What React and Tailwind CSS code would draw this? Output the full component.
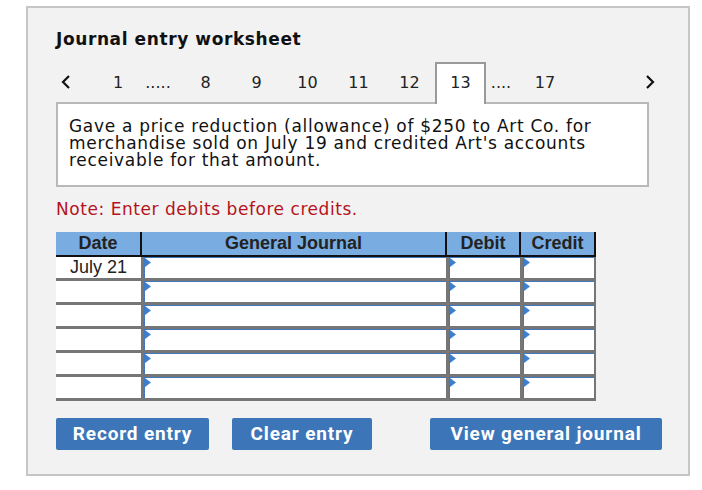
import React from 'react';

const Tri = () => (
  <svg className="absolute left-0 top-0" width="6" height="9" viewBox="0 0 6 9">
    <polygon points="0,0 6,4.5 0,9" fill="#3d7fd0" />
  </svg>
);

const InputCell = ({ w }) => (
  <div className={`relative h-full bg-white border-l border-t border-[#3f78c0] ${w}`}>
    <Tri />
  </div>
);

const Chevron = ({ dir }) => (
  <svg width="10" height="16" viewBox="0 0 10 16">
    <polyline
      points={dir === 'left' ? '8,2 2,8 8,14' : '2,2 8,8 2,14'}
      fill="none"
      stroke="#111"
      strokeWidth="2.2"
    />
  </svg>
);

const tabs = [
  { t: '1', cls: 'ml-[24px] w-[36px]' },
  { t: '.....', cls: 'w-[44px]' },
  { t: '8', cls: 'w-[51px]' },
  { t: '9', cls: 'w-[51px]' },
  { t: '10', cls: 'w-[51px]' },
  { t: '11', cls: 'w-[51px]' },
  { t: '12', cls: 'w-[51px]' },
];

const rows = ['July 21', '', '', '', '', ''];

export default function App() {
  return (
    <div className="w-[702px] h-[490px] bg-white pt-[6px] pl-[26px]">
      <div className="w-[664px] h-[470px] border-2 border-[#c6c6c6] bg-[#f2f2f2] pl-[28px] pr-[26px] pt-[21px] font-['DejaVu_Sans',sans-serif] text-[#222]">
        <h1 className="text-[17px] tracking-[0.6px] font-bold leading-[20px] text-[#111]">Journal entry worksheet</h1>

        {/* Tab row */}
        <div className="mt-[13px] flex items-end h-[40px] text-[16px] leading-[20px]">
          <div className="w-[20px] h-[38px] flex items-center justify-center pb-[2px]">
            <Chevron dir="left" />
          </div>
          {tabs.map((x, i) => (
            <div key={i} className={`h-[38px] flex items-center justify-center ${x.cls}`}>
              {x.t}
            </div>
          ))}
          <div className="relative z-10 -mb-[2px] w-[51px] h-[42px] bg-white border-2 border-b-0 border-[#9a9a9a] flex items-center justify-center pb-[2px]">
            13
          </div>
          <div className="h-[38px] w-[30px] flex items-center justify-center">....</div>
          <div className="h-[38px] w-[58px] flex items-center justify-center">17</div>
          <div className="flex-1" />
          <div className="w-[20px] h-[38px] flex items-center justify-center pb-[2px] mr-[2px]">
            <Chevron dir="right" />
          </div>
        </div>

        {/* Description */}
        <div className="w-[593px] border-2 border-[#b9b9b9] bg-white pl-[11px] pr-[10px] pt-[14px] pb-[16px] text-[17px] tracking-[0.7px] leading-[17px] text-[#111]">
          Gave a price reduction (allowance) of $250 to Art Co. for merchandise sold on July 19 and credited Art's accounts receivable for that amount.
        </div>

        <p className="mt-[12px] text-[17px] tracking-[0.55px] leading-[20px] text-[#b5121b]">Note: Enter debits before credits.</p>

        {/* Table */}
        <div className="mt-[13px] w-[540px] font-['Liberation_Sans',sans-serif] text-[18px]">
          <div className="flex h-[25px] bg-[#79ade2] border-b-2 border-[#111] font-bold text-[#222] leading-[23px]">
            <div className="w-[86px] border-r-2 border-[#111] text-center">Date</div>
            <div className="w-[305px] border-r-2 border-[#111] text-center">General Journal</div>
            <div className="w-[74px] border-r-2 border-[#111] text-center">Debit</div>
            <div className="w-[75px] border-r-2 border-[#111] text-center">Credit</div>
          </div>
          {rows.map((d, i) => (
            <div key={i} className="flex gap-[3px] h-[24px] bg-[#767676] pb-[3px] pr-[2px]">
              <div className="w-[85px] h-full bg-white text-center leading-[21px] text-[#222]">{d}</div>
              <InputCell w="w-[302px]" />
              <InputCell w="w-[71px]" />
              <InputCell w="w-[71px]" />
            </div>
          ))}
        </div>

        {/* Buttons */}
        <div className="mt-[17px] flex font-['Roboto',sans-serif] font-bold text-[19px] tracking-[0.85px] text-white">
          <button className="w-[153px] h-[32px] rounded-[2px] bg-[#3c76b8]">Record entry</button>
          <button className="ml-[23px] w-[140px] h-[32px] rounded-[2px] bg-[#3c76b8]">Clear entry</button>
          <button className="ml-[58px] w-[232px] h-[32px] rounded-[2px] bg-[#3c76b8]">View general journal</button>
        </div>
      </div>
    </div>
  );
}
